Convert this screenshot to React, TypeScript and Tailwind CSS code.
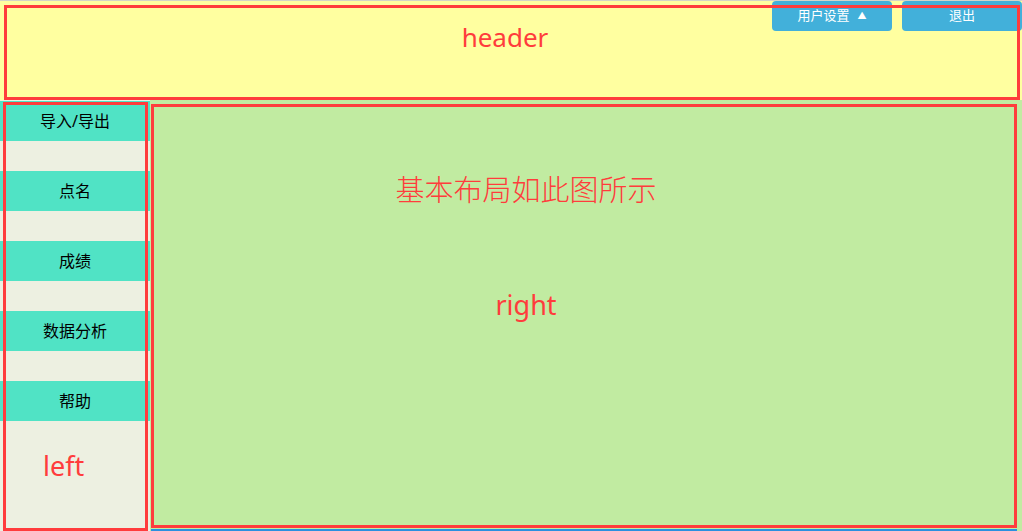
import React from "react";

const font = { fontFamily: '"Noto Sans", "Noto Sans CJK SC", sans-serif' };

export default function App() {
  const items = ["导入/导出", "点名", "成绩", "数据分析", "帮助"];
  return (
    <div
      className="w-[1022px] h-[531px] overflow-hidden flex flex-col bg-[#edf0e1]"
      style={font}
    >
      {/* header row */}
      <div className="relative h-[100px] bg-[#ffffa0] pt-[4px] pl-[4px] border-t border-[#d4d4c8]">
        <div className="absolute top-0 right-0 flex gap-[10px] z-0">
          <button className="w-[120px] h-[30px] rounded-[4px] bg-[#42b0da] text-white text-[13px] flex items-center justify-center gap-[8px]">
            <span>用户设置</span>
            <span className="text-[9px]">▲</span>
          </button>
          <button className="w-[120px] h-[30px] rounded-[4px] bg-[#42b0da] text-white text-[13px] flex items-center justify-center">
            退出
          </button>
        </div>
        <div className="relative z-10 w-[1016px] h-[95px] border-[3px] border-[#ff3c3c] flex justify-center pt-[13px] pr-[14px]">
          <span className="text-[26px] leading-[32px] text-[#ff3c3c]">header</span>
        </div>
      </div>

      {/* body */}
      <div className="flex h-[431px]">
        <div className="relative w-[150px] h-full bg-[#edf0e1] flex flex-col pt-[1px]">
          <div className="flex flex-col gap-[30px]">
            {items.map((t) => (
              <div
                key={t}
                className="h-[40px] w-[150px] bg-[#50e3c5] flex items-center justify-center text-[16px] text-black"
              >
                {t}
              </div>
            ))}
          </div>
          <div className="pl-[43px] pt-[28px] text-[27px] leading-[34px] text-[#ff3c3c]">left</div>
          <div className="absolute left-[3px] top-[2px] w-[145px] h-[429px] border-[3px] border-[#ff3c3c] pointer-events-none" />
        </div>
        <div className="flex-1 h-full bg-[#c1eba1] pl-[1px] pr-[5px] pt-[4px] flex flex-col">
          <div className="w-[866px] h-[424px] border-[3px] border-[#ff3c3c]">
            <div className="w-[744px] text-center pt-[63px] text-[29px] leading-[37px] text-[#ff3c3c]" style={{ fontFamily: '"Noto Sans CJK SC", sans-serif', fontWeight: 300 }}>
              基本布局如此图所示
            </div>
            <div className="w-[744px] text-center pt-[81px] text-[27px] leading-[34px] text-[#ff3c3c]">right</div>
          </div>
          <div className="h-[1px]" />
          <div className="h-[2px] bg-[#2a90e0]" />
        </div>
      </div>
    </div>
  );
}
